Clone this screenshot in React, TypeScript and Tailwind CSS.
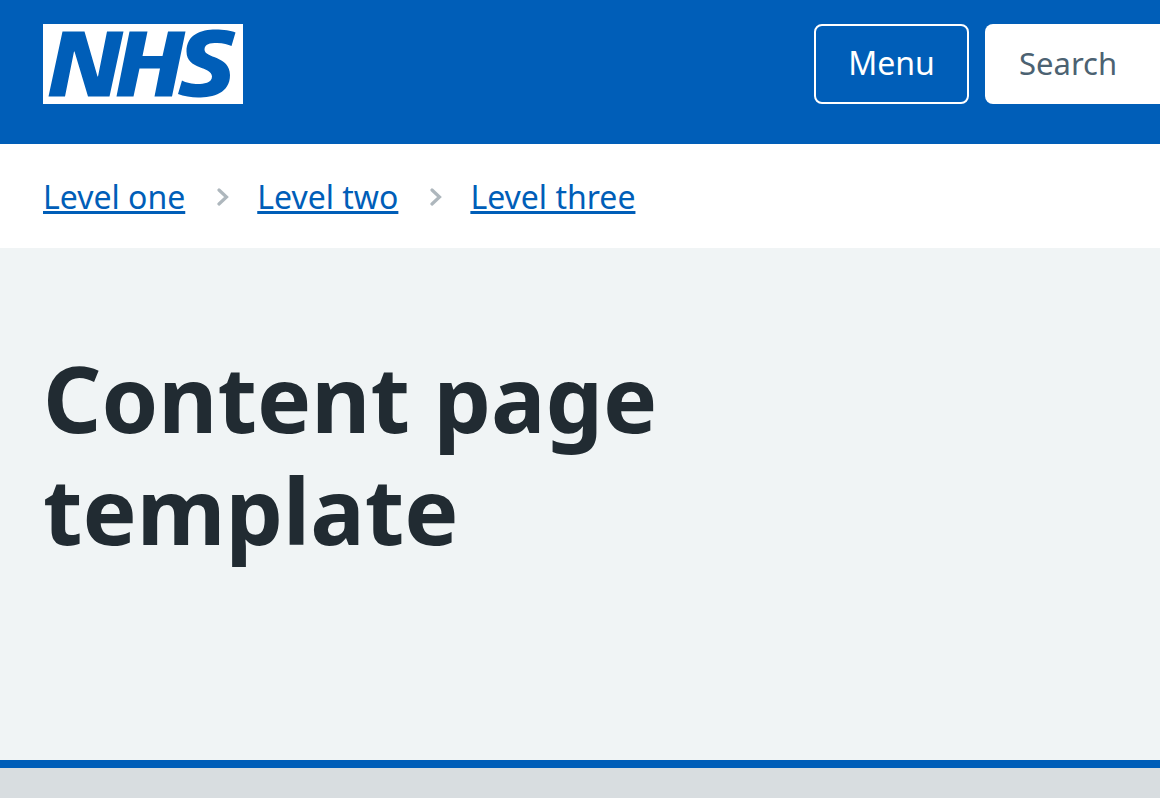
import { Fragment } from 'react';

const LEVELS = ['Level one', 'Level two', 'Level three'];

function Logo() {
  return (
    <svg viewBox="0 0 40 16" className="h-20 w-[200px]" role="img" aria-label="NHS">
      <path fill="#fff" d="M0 0h40v16H0z" />
      <path
        fill="#005eb8"
        d="M3.9 1.5h4.4l2.6 9h.1l1.8-9h3.3l-2.8 13H9l-2.7-9h-.1l-1.8 9H1.1M17.3 1.5h3.6l-1 4.9h4L25 1.5h3.5l-2.7 13h-3.5l1.1-5.6h-4.1l-1.2 5.6h-3.4M37.7 4.4c-.7-.3-1.6-.6-2.9-.6-1.4 0-2.5.2-2.5 1.3 0 1.8 5.1 1.2 5.1 5.1 0 3.6-3.3 4.5-6.4 4.5-1.3 0-2.9-.3-4-.7l.8-2.7c.7.4 2.1.7 3.2.7s2.8-.2 2.8-1.5c0-2.1-5.1-1.3-5.1-5 0-3.4 2.9-4.4 5.8-4.4 1.6 0 3.1.2 4 .6"
      />
    </svg>
  );
}

function Chevron() {
  return (
    <svg viewBox="0 0 12 18" className="mr-7 ml-8 h-[18px] w-3 shrink-0" fill="none" aria-hidden="true">
      <path d="M2 2l7.5 7L2 16" stroke="#aeb7bd" strokeWidth="3.2" strokeLinecap="round" />
    </svg>
  );
}

function Header() {
  return (
    <header className="flex h-36 items-start bg-[#005eb8] pt-6 pl-[43px]">
      <a href="#">
        <Logo />
      </a>
      <button className="ml-auto h-20 w-[155px] rounded-lg border-2 border-white pb-0.5 text-[32px] text-white">
        Menu
      </button>
      <input
        type="search"
        aria-label="Search"
        placeholder="Search"
        className="ml-4 h-20 w-[175px] rounded-l-lg bg-white pb-0.5 pl-[34px] text-[31px] text-[#4c6272] placeholder:text-[#4c6272]"
      />
    </header>
  );
}

function Breadcrumb() {
  return (
    <nav aria-label="Breadcrumb" className="flex h-[104px] items-center bg-white px-[43px] pt-0.5 text-[32px]">
      {LEVELS.map((level, i) => (
        <Fragment key={level}>
          {i > 0 && <Chevron />}
          <a href="#" className="text-[#005eb8] underline decoration-3 underline-offset-2">
            {level}
          </a>
        </Fragment>
      ))}
    </nav>
  );
}

export default function App() {
  return (
    <div className="flex min-h-screen flex-col overflow-x-hidden bg-[#d8dde0] font-['Noto_Sans',sans-serif]">
      <Header />
      <Breadcrumb />
      <main className="h-[520px] border-b-8 border-[#005eb8] bg-[#f0f4f5] px-[43px] pt-[94px]">
        <h1 className="max-w-[700px] text-[91px] leading-[112px] font-bold text-[#212b32]">
          Content page template
        </h1>
      </main>
    </div>
  );
}
